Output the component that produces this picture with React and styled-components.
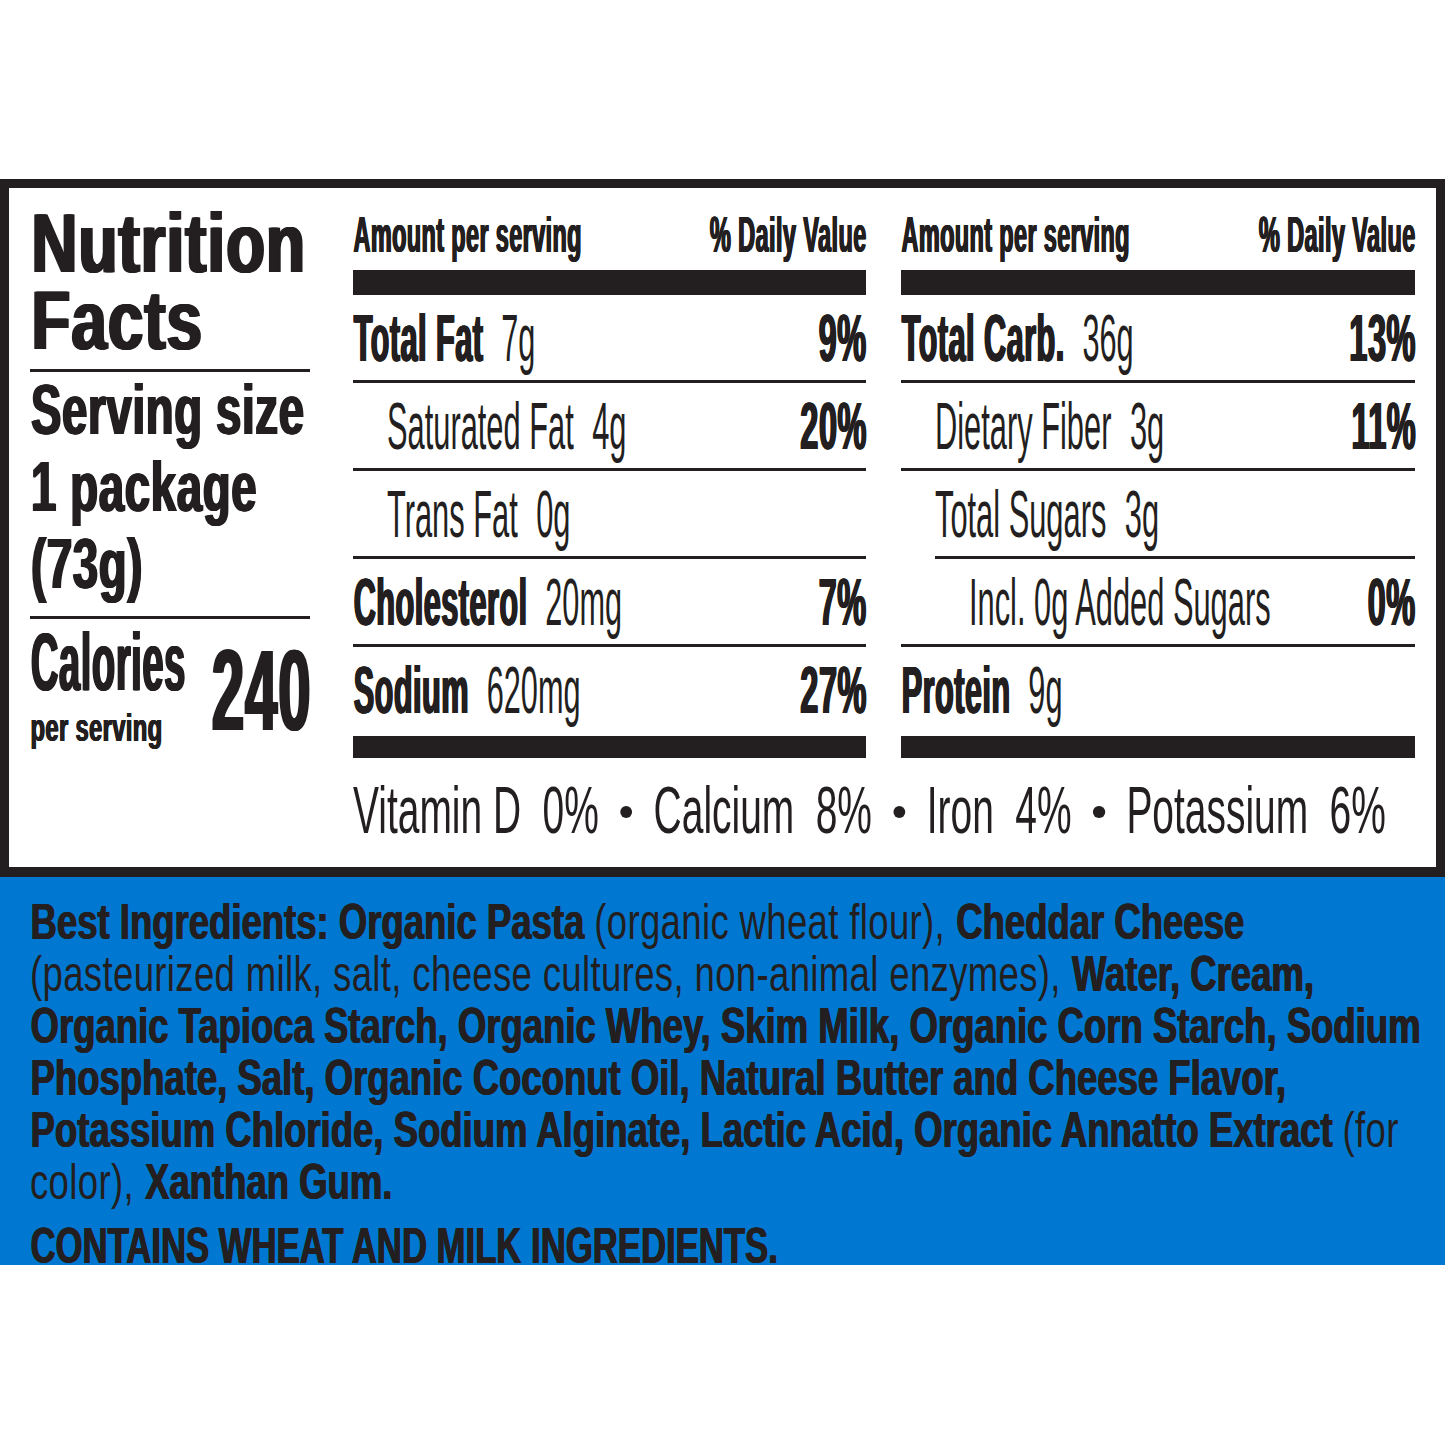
import React from "react";
import styled, { createGlobalStyle, css } from "styled-components";

const INK = "#231f20";
const BLUE = "#0078d2";

const GlobalStyle = createGlobalStyle`
  *, *::before, *::after { box-sizing: border-box; }
  html, body { margin: 0; padding: 0; background: #ffffff; }
  body {
    overflow: hidden;
    font-family: "Liberation Sans", Arial, Helvetica, sans-serif;
    color: ${INK};
  }
`;

/* black condensed look: thicken vertical stems, keep letters apart */
const heavy = css`
  font-weight: 700;
  letter-spacing: 0.015em;
  text-shadow: 0.015em 0 0 currentColor, 0.03em 0 0 currentColor,
    0.045em 0 0 currentColor;
`;

const bold = css`
  font-weight: 700;
  letter-spacing: 0;
  text-shadow: 0.015em 0 0 currentColor, 0.03em 0 0 currentColor;
`;

const light = css`
  font-weight: 400;
`;

/* Condensed type: the installed faces are regular width, so each run of
   text is narrowed horizontally around its own anchor edge. */
const Squeeze = styled.span`
  display: inline-block;
  white-space: nowrap;
  transform: scaleX(${(p) => p.$s});
  transform-origin: ${(p) => (p.$end ? "right" : "left")} center;
`;

const Page = styled.main`
  width: 1445px;
  height: 1445px;
  padding-top: 179px;
  overflow: hidden;
  background: #ffffff;
`;

const Panel = styled.section`
  display: flex;
  border: 9px solid ${INK};
  border-bottom-width: 10px;
  padding: 0 21px;
  background: #ffffff;
`;

/* ---------- left column ---------- */
const Side = styled.div`
  width: 280px;
  flex: none;
  margin-right: 43px;
  display: flex;
  flex-direction: column;
`;

const Title = styled(Squeeze)`
  display: block;
  margin-top: 17px;
  font-size: 84px;
  line-height: 77px;
  ${heavy}
`;

const Serving = styled(Squeeze)`
  display: block;
  font-size: 70px;
  line-height: 77px;
  ${heavy}
`;

const SideRule = styled.div`
  height: 3px;
  background: ${INK};
  margin-top: ${(p) => p.$gap}px;
`;

const CaloriesRow = styled.div`
  display: flex;
  align-items: flex-start;
  padding-top: 2px;
`;

const CalStack = styled.div`
  flex: 1 1 0;
  min-width: 0;
  display: flex;
  flex-direction: column;
`;

const CalWord = styled(Squeeze)`
  display: block;
  font-size: 82px;
  line-height: 82px;
  ${heavy}
`;

const PerServing = styled(Squeeze)`
  display: block;
  margin-top: 6px;
  font-size: 38px;
  line-height: 38px;
  ${heavy}
`;

const BigNumber = styled(Squeeze)`
  flex: none;
  margin-top: 12px;
  font-size: 115px;
  line-height: 115px;
  ${heavy}
`;

/* ---------- tables ---------- */
const Main = styled.div`
  width: 1062px;
  flex: none;
  display: flex;
  flex-direction: column;
`;

const Tables = styled.div`
  display: grid;
  grid-template-columns: 513px 514px;
  column-gap: 35px;
`;

const Table = styled.div`
  display: flex;
  flex-direction: column;
`;

const TableHead = styled.div`
  height: 82px;
  display: flex;
  align-items: flex-end;
  padding-bottom: 10px;
  font-size: 50px;
  line-height: 50px;
  ${heavy}
`;

const HeadLeft = styled(Squeeze)`
  flex: 1 1 0;
  min-width: 0;
`;

const HeadRight = styled(Squeeze)`
  flex: none;
`;

const Bar = styled.div`
  height: ${(p) => p.$h}px;
  margin-top: ${(p) => p.$mt || 0}px;
  background: ${INK};
`;

const Rule = styled.div`
  height: 3px;
  margin-left: ${(p) => p.$indent || 0}px;
  background: ${INK};
`;

const Row = styled.div`
  height: 85px;
  display: flex;
  align-items: center;
  padding-left: ${(p) => p.$indent || 0}px;
  font-size: 67px;
  line-height: 67px;
`;

const RowLabel = styled(Squeeze)`
  flex: 1 1 0;
  min-width: 0;
`;

const Nutrient = styled.span`
  ${(p) => (p.$bold ? heavy : light)}
`;

const Amount = styled.span`
  ${light}
  margin-left: 0.6em;
`;

const Pct = styled(Squeeze)`
  flex: none;
  ${heavy}
`;

const VitaminLine = styled.div`
  padding: 19px 0 24px;
  font-size: 66px;
  line-height: 66px;
  ${light}
`;

const VitPct = styled.span`
  margin-left: 0.55em;
`;

const VIT_S = 0.59;
const Dot = styled.span`
  display: inline-block;
  width: ${12 / VIT_S}px;
  height: 12px;
  margin: 0 0.55em;
  border-radius: 50%;
  background: ${INK};
  vertical-align: 0.23em;
`;

/* ---------- ingredients ---------- */
const ING_S = 0.73;

const Ingredients = styled.section`
  height: 388px;
  background: ${BLUE};
  padding: 19px 20px 0 30px;
`;

const IngredientText = styled.p`
  margin: 0;
  width: calc(100% / ${ING_S});
  transform: scaleX(${ING_S});
  transform-origin: left top;
  white-space: nowrap;
  font-size: 50px;
  line-height: 52px;
  letter-spacing: 0.01em;
  ${light}
`;

const Strong = styled.strong`
  ${bold}
`;

const Allergen = styled.p`
  margin: 19px 0 0;
  transform: scaleX(0.694);
  transform-origin: left top;
  white-space: nowrap;
  font-size: 50px;
  line-height: 38px;
  ${bold}
`;

const leftRows = [
  { name: "Total Fat", amt: "7g", pct: "9%", bold: true },
  { name: "Saturated Fat", amt: "4g", pct: "20%", indent: 34 },
  { name: "Trans Fat", amt: "0g", indent: 34 },
  { name: "Cholesterol", amt: "20mg", pct: "7%", bold: true },
  { name: "Sodium", amt: "620mg", pct: "27%", bold: true },
];

const rightRows = [
  { name: "Total Carb.", amt: "36g", pct: "13%", bold: true },
  { name: "Dietary Fiber", amt: "3g", pct: "11%", indent: 34 },
  { name: "Total Sugars", amt: "3g", indent: 34 },
  { name: "Incl. 0g Added Sugars", pct: "0%", indent: 68, ruleIndent: 34 },
  { name: "Protein", amt: "9g", bold: true },
];

const vitamins = [
  ["Vitamin D", "0%"],
  ["Calcium", "8%"],
  ["Iron", "4%"],
  ["Potassium", "6%"],
];

function NutrientTable({ rows }) {
  return (
    <Table>
      <TableHead>
        <HeadLeft $s={0.47}>Amount per serving</HeadLeft>
        <HeadRight $s={0.472} $end>
          % Daily Value
        </HeadRight>
      </TableHead>
      <Bar $h={25} />
      {rows.map((r, i) => (
        <React.Fragment key={r.name}>
          {i > 0 && <Rule $indent={r.ruleIndent} />}
          <Row $indent={r.indent}>
            <RowLabel $s={r.bold ? 0.458 : 0.46}>
              <Nutrient $bold={r.bold}>{r.name}</Nutrient>
              {r.amt && <Amount>{r.amt}</Amount>}
            </RowLabel>
            {r.pct && (
              <Pct $s={0.485} $end>
                {r.pct}
              </Pct>
            )}
          </Row>
        </React.Fragment>
      ))}
      <Bar $h={22} $mt={4} />
    </Table>
  );
}

export default function App() {
  return (
    <Page>
      <GlobalStyle />
      <Panel>
        <Side>
          <Title $s={0.76}>
            Nutrition
            <br />
            Facts
          </Title>
          <SideRule $gap={10} />
          <Serving $s={0.65}>
            Serving size
            <br />1 package
            <br />
            (73g)
          </Serving>
          <SideRule $gap={13} />
          <CaloriesRow>
            <CalStack>
              <CalWord $s={0.465}>Calories</CalWord>
              <PerServing $s={0.625}>per serving</PerServing>
            </CalStack>
            <BigNumber $s={0.505} $end>
              240
            </BigNumber>
          </CaloriesRow>
        </Side>
        <Main>
          <Tables>
            <NutrientTable rows={leftRows} />
            <NutrientTable rows={rightRows} />
          </Tables>
          <VitaminLine>
            <Squeeze $s={VIT_S}>
              {vitamins.map(([name, pct], i) => (
                <React.Fragment key={name}>
                  {i > 0 && <Dot />}
                  {name}
                  <VitPct>{pct}</VitPct>
                </React.Fragment>
              ))}
            </Squeeze>
          </VitaminLine>
        </Main>
      </Panel>
      <Ingredients>
        <IngredientText>
          <Strong>Best Ingredients: Organic Pasta</Strong> (organic wheat flour),{" "}
          <Strong>Cheddar Cheese</Strong>
          <br />
          (pasteurized milk, salt, cheese cultures, non-animal enzymes),{" "}
          <Strong>Water, Cream,</Strong>
          <br />
          <Strong>
            Organic Tapioca Starch, Organic Whey, Skim Milk, Organic Corn Starch, Sodium
          </Strong>
          <br />
          <Strong>
            Phosphate, Salt, Organic Coconut Oil, Natural Butter and Cheese Flavor,
          </Strong>
          <br />
          <Strong>
            Potassium Chloride, Sodium Alginate, Lactic Acid, Organic Annatto Extract
          </Strong>{" "}
          (for
          <br />
          color), <Strong>Xanthan Gum.</Strong>
        </IngredientText>
        <Allergen>CONTAINS WHEAT AND MILK INGREDIENTS.</Allergen>
      </Ingredients>
    </Page>
  );
}
